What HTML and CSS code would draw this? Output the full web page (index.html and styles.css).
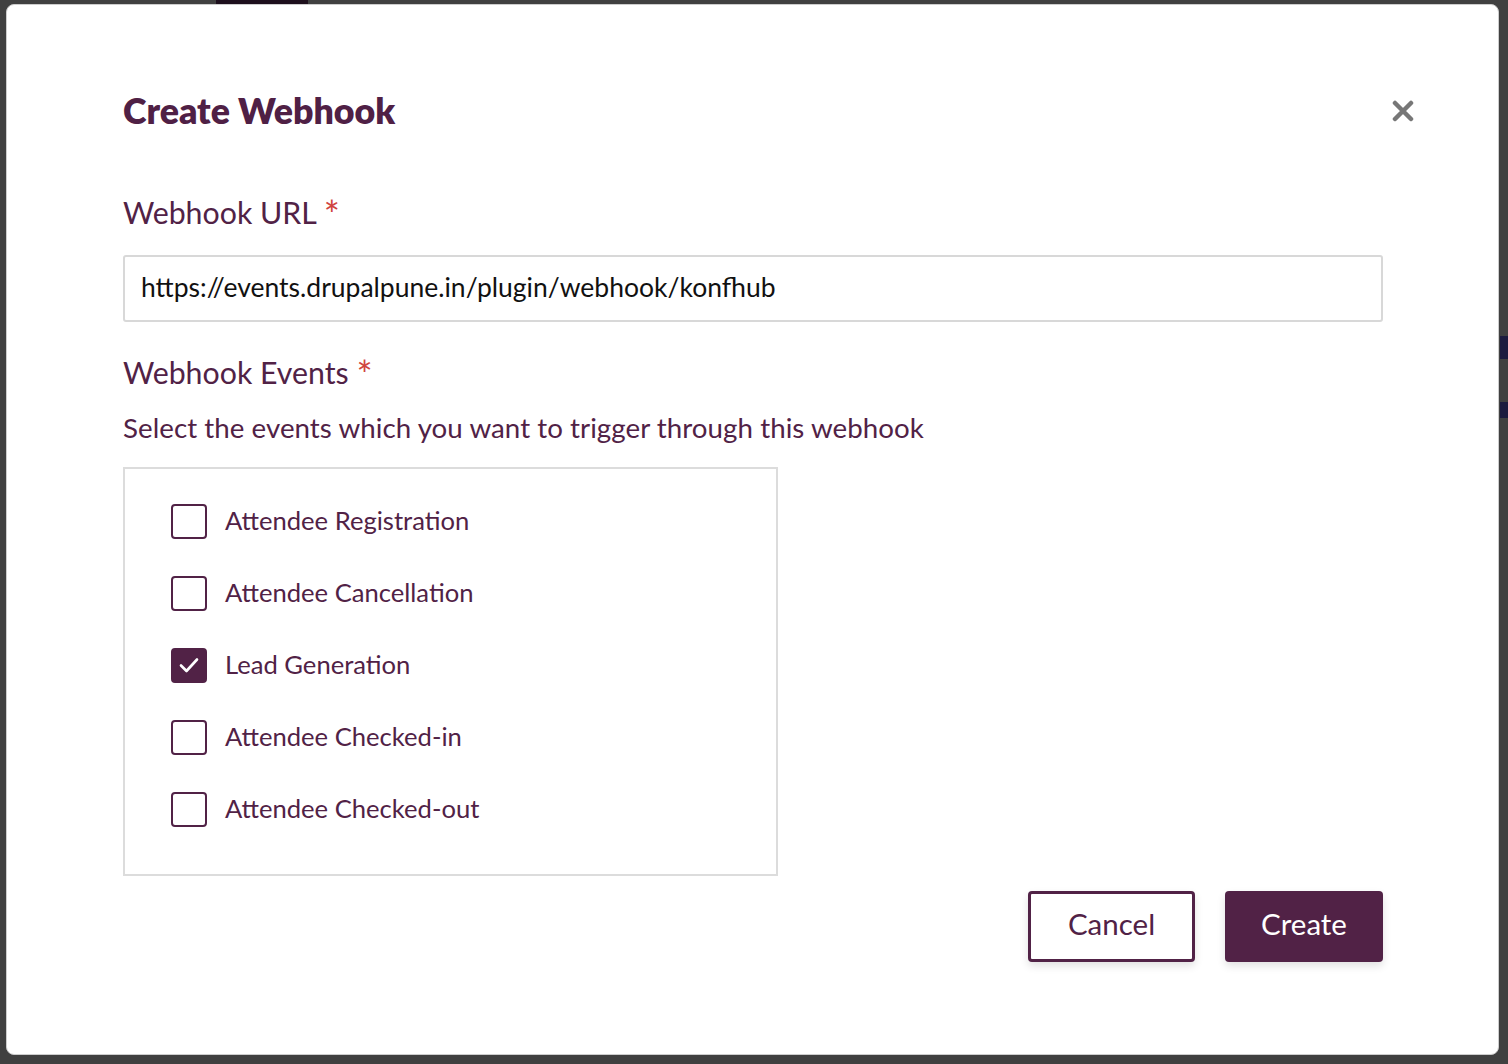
FILE: index.html
```html
<!DOCTYPE html>
<html lang="en">
<head>
<meta charset="utf-8">
<title>Create Webhook</title>
<link rel="stylesheet" href="styles.css">
</head>
<body>
<div class="bg-strip"></div>
<div class="bg-navy bg-navy-1"></div>
<div class="bg-navy bg-navy-2"></div>
<div class="modal">
  <div class="modal-header">
    <h2 class="modal-title">Create Webhook</h2>
    <button class="close-btn" aria-label="Close">
      <svg width="22" height="22" viewBox="0 0 22 22"><path d="M3 3 L19 19 M19 3 L3 19" stroke="#777" stroke-width="4.5" stroke-linecap="round"/></svg>
    </button>
  </div>
  <label class="field-label label-url">Webhook URL <span class="req">*</span></label>
  <div class="input">https://events.drupalpune.in/plugin/webhook/konfhub</div>
  <label class="field-label label-events">Webhook Events <span class="req">*</span></label>
  <p class="desc">Select the events which you want to trigger through this webhook</p>
  <div class="events-box">
    <div class="event-row"><span class="cb"></span><span class="event-label">Attendee Registration</span></div>
    <div class="event-row"><span class="cb"></span><span class="event-label">Attendee Cancellation</span></div>
    <div class="event-row"><span class="cb cb-checked"><svg width="22" height="18" viewBox="0 0 22 18"><path d="M3 9.5 L8.5 15 L19 3.5" fill="none" stroke="#fff" stroke-width="2.6" stroke-linecap="round" stroke-linejoin="round"/></svg></span><span class="event-label">Lead Generation</span></div>
    <div class="event-row"><span class="cb"></span><span class="event-label">Attendee Checked-in</span></div>
    <div class="event-row"><span class="cb"></span><span class="event-label">Attendee Checked-out</span></div>
  </div>
  <div class="actions">
    <button class="btn btn-outline">Cancel</button>
    <button class="btn btn-primary">Create</button>
  </div>
</div>
</body>
</html>
```

FILE: styles.css
```css
html, body {
  margin: 0;
  height: 100%;
}
body {
  background: #404040;
  padding: 4px 9px 9px 6px;
  box-sizing: border-box;
  font-family: Lato, "Open Sans", sans-serif;
  color: #512246;
  overflow: hidden;
}
.bg-strip {
  position: absolute;
  left: 216px;
  top: 0;
  width: 92px;
  height: 4px;
  background: #1d0f1c;
}
.bg-navy {
  position: absolute;
  right: 0;
  width: 8px;
  background: #1d1b3f;
}
.bg-navy-1 { top: 336px; height: 23px; }
.bg-navy-2 { top: 402px; height: 16px; }
.modal {
  position: relative;
  height: 1051px;
  box-sizing: border-box;
  background: #fff;
  border: 1px solid #cdcdcd;
  border-radius: 8px;
  padding: 86px 115px 0 116px;
  display: flex;
  flex-direction: column;
}
.modal-header {
  display: flex;
  align-items: center;
  justify-content: space-between;
  height: 40px;
  margin-right: -30px;
}
.modal-title {
  margin: 0;
  font-size: 35.7px;
  font-weight: 800;
  line-height: 40px;
  color: #4f2045;
}
.close-btn {
  border: 0;
  background: none;
  padding: 0;
  width: 22px;
  height: 22px;
  margin-right: -1px;
  display: flex;
}
.field-label {
  display: block;
  font-size: 30.3px;
  line-height: 34px;
  color: #512246;
}
.label-url { margin-top: 64px; }
.label-events { margin-top: 33px; }
.req {
  color: #d0443e;
  font-size: 38px;
  line-height: 0;
  position: relative;
  top: 5px;
}
.input {
  margin-top: 26px;
  height: 67px;
  box-sizing: border-box;
  border: 2px solid #d8d8d8;
  border-radius: 3px;
  padding: 0 16px 4px;
  display: flex;
  align-items: center;
  font-size: 26.5px;
  color: #111;
}
.desc {
  margin: 24px 0 0;
  font-size: 27.7px;
  letter-spacing: 0.05px;
  line-height: 30px;
}
.events-box {
  margin-top: 24px;
  width: 655px;
  height: 409px;
  box-sizing: border-box;
  border: 2px solid #dcdcdc;
  padding: 16px 0 0 46px;
}
.event-row {
  display: flex;
  align-items: center;
  height: 72px;
}
.cb {
  width: 36px;
  height: 35px;
  box-sizing: border-box;
  border: 2px solid #512246;
  border-radius: 4px;
  display: flex;
  align-items: center;
  justify-content: center;
  flex-shrink: 0;
}
.cb-checked {
  background: #512246;
}
.event-label {
  margin-left: 18px;
  font-size: 25.6px;
  position: relative;
  top: -1px;
}
.actions {
  margin-top: 15px;
  display: flex;
  justify-content: flex-end;
  gap: 30px;
}
.btn {
  height: 71px;
  box-sizing: border-box;
  border-radius: 4px;
  font-family: inherit;
  font-size: 29.5px;
  padding: 0 0 6px;
  box-shadow: 0 4px 8px rgba(0,0,0,0.12);
}
.btn-outline {
  width: 167px;
  background: #fff;
  border: 3px solid #512246;
  color: #512246;
}
.btn-primary {
  width: 158px;
  background: #512246;
  border: 0;
  color: #fff;
}
```
